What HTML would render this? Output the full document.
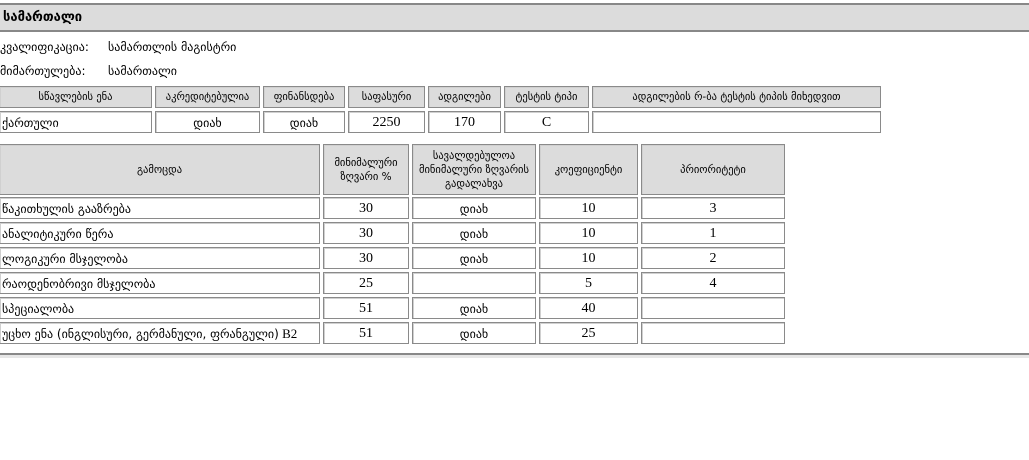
<!DOCTYPE html>
<html><head><meta charset="utf-8"><style>
body{margin:0;width:1029px;height:460px;background:#fff;position:relative;overflow:hidden;font-family:"DejaVu Sans","Liberation Sans",sans-serif;color:#000}
.c{position:absolute;box-sizing:border-box;border:1px solid #8a8a8a;box-shadow:inset 1px 1px 0 #d0d0d0;display:flex;align-items:center;justify-content:center;text-align:center;font-size:11px;line-height:14px}
.h{background:#dcdcdc;font-size:10.5px}
.l{justify-content:flex-start;padding-left:2px;font-size:12px;padding-top:2px}
.n{font-family:"Liberation Serif",serif;font-size:14px;padding-top:2px}
.g{font-size:12px;padding-top:2px}
.t{position:absolute;font-size:12px;white-space:nowrap}
</style></head><body>
<div style="position:absolute;left:0;top:3px;width:1029px;height:29px;box-sizing:border-box;background:#dcdcdc;border-top:2px solid #888;border-bottom:2px solid #888"></div>
<div class="t" style="left:3px;top:10px;font-weight:bold;font-size:13px">სამართალი</div>
<div class="t" style="left:0;top:40px">კვალიფიკაცია:</div>
<div class="t" style="left:108px;top:40px">სამართლის მაგისტრი</div>
<div class="t" style="left:0;top:64px">მიმართულება:</div>
<div class="t" style="left:108px;top:64px">სამართალი</div>

<div class="c h" style="left:-1px;top:86px;width:153px;height:22px">სწავლების ენა</div>
<div class="c h" style="left:155px;top:86px;width:105px;height:22px">აკრედიტებულია</div>
<div class="c h" style="left:263px;top:86px;width:82px;height:22px">ფინანსდება</div>
<div class="c h" style="left:348px;top:86px;width:77px;height:22px">საფასური</div>
<div class="c h" style="left:428px;top:86px;width:73px;height:22px">ადგილები</div>
<div class="c h" style="left:504px;top:86px;width:85px;height:22px">ტესტის ტიპი</div>
<div class="c h" style="left:592px;top:86px;width:289px;height:22px">ადგილების რ-ბა ტესტის ტიპის მიხედვით</div>

<div class="c l" style="left:-1px;top:111px;width:153px;height:22px">ქართული</div>
<div class="c g" style="left:155px;top:111px;width:105px;height:22px">დიახ</div>
<div class="c g" style="left:263px;top:111px;width:82px;height:22px">დიახ</div>
<div class="c n" style="left:348px;top:111px;width:77px;height:22px">2250</div>
<div class="c n" style="left:428px;top:111px;width:73px;height:22px">170</div>
<div class="c n" style="left:504px;top:111px;width:85px;height:22px">C</div>
<div class="c" style="left:592px;top:111px;width:289px;height:22px"></div>

<div class="c h" style="left:-1px;top:144px;width:321px;height:51px">გამოცდა</div>
<div class="c h" style="left:323px;top:144px;width:86px;height:51px">მინიმალური<br>ზღვარი %</div>
<div class="c h" style="left:412px;top:144px;width:124px;height:51px">სავალდებულოა<br>მინიმალური ზღვარის<br>გადალახვა</div>
<div class="c h" style="left:539px;top:144px;width:99px;height:51px">კოეფიციენტი</div>
<div class="c h" style="left:641px;top:144px;width:144px;height:51px">პრიორიტეტი</div>

<div class="c l" style="left:-1px;top:197px;width:321px;height:22px">წაკითხულის გააზრება</div>
<div class="c n" style="left:323px;top:197px;width:86px;height:22px">30</div>
<div class="c g" style="left:412px;top:197px;width:124px;height:22px">დიახ</div>
<div class="c n" style="left:539px;top:197px;width:99px;height:22px">10</div>
<div class="c n" style="left:641px;top:197px;width:144px;height:22px">3</div>

<div class="c l" style="left:-1px;top:222px;width:321px;height:22px">ანალიტიკური წერა</div>
<div class="c n" style="left:323px;top:222px;width:86px;height:22px">30</div>
<div class="c g" style="left:412px;top:222px;width:124px;height:22px">დიახ</div>
<div class="c n" style="left:539px;top:222px;width:99px;height:22px">10</div>
<div class="c n" style="left:641px;top:222px;width:144px;height:22px">1</div>

<div class="c l" style="left:-1px;top:247px;width:321px;height:22px">ლოგიკური მსჯელობა</div>
<div class="c n" style="left:323px;top:247px;width:86px;height:22px">30</div>
<div class="c g" style="left:412px;top:247px;width:124px;height:22px">დიახ</div>
<div class="c n" style="left:539px;top:247px;width:99px;height:22px">10</div>
<div class="c n" style="left:641px;top:247px;width:144px;height:22px">2</div>

<div class="c l" style="left:-1px;top:272px;width:321px;height:22px">რაოდენობრივი მსჯელობა</div>
<div class="c n" style="left:323px;top:272px;width:86px;height:22px">25</div>
<div class="c g" style="left:412px;top:272px;width:124px;height:22px"></div>
<div class="c n" style="left:539px;top:272px;width:99px;height:22px">5</div>
<div class="c n" style="left:641px;top:272px;width:144px;height:22px">4</div>

<div class="c l" style="left:-1px;top:297px;width:321px;height:22px">სპეციალობა</div>
<div class="c n" style="left:323px;top:297px;width:86px;height:22px">51</div>
<div class="c g" style="left:412px;top:297px;width:124px;height:22px">დიახ</div>
<div class="c n" style="left:539px;top:297px;width:99px;height:22px">40</div>
<div class="c n" style="left:641px;top:297px;width:144px;height:22px"></div>

<div class="c l" style="left:-1px;top:322px;width:321px;height:22px;white-space:nowrap">უცხო ენა (ინგლისური, გერმანული, ფრანგული)<span style="font-family:'Liberation Serif',serif;font-size:13px">&nbsp;B2</span></div>
<div class="c n" style="left:323px;top:322px;width:86px;height:22px">51</div>
<div class="c g" style="left:412px;top:322px;width:124px;height:22px">დიახ</div>
<div class="c n" style="left:539px;top:322px;width:99px;height:22px">25</div>
<div class="c n" style="left:641px;top:322px;width:144px;height:22px"></div>

<div style="position:absolute;left:0;top:353px;width:1029px;height:2px;background:#888"></div>
<div style="position:absolute;left:0;top:355px;width:1029px;height:3px;background:#e6e6e6"></div>
</body></html>
